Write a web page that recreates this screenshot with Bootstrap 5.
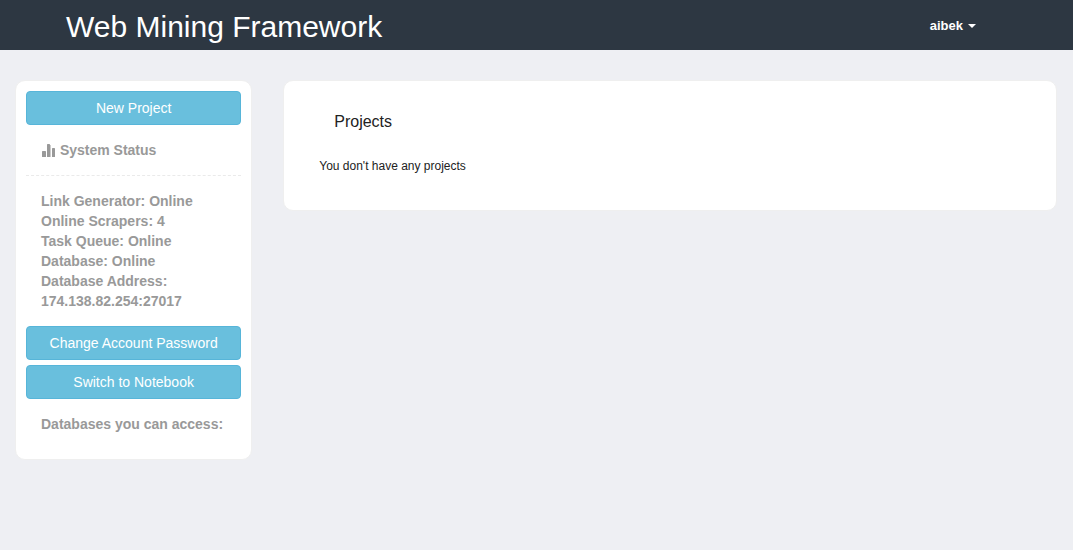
<!DOCTYPE html>
<html lang="en">
<head>
<meta charset="utf-8">
<meta name="viewport" content="width=device-width, initial-scale=1">
<title>Web Mining Framework</title>
<link href="https://cdn.jsdelivr.net/npm/bootstrap@5.3.0/dist/css/bootstrap.min.css" rel="stylesheet">
<style>
body { background: #eeeff3; color: #222; font-family: "Liberation Sans", Arial, sans-serif; font-size: 14px; line-height: 20px; }
.topbar { background: #2d3742; min-height: 50px; }
.brand-title { font-size: 30px; line-height: 34px; color: #fff; padding: 4px 0 0 66px; }
.user-menu { font-size: 13px; line-height: 20px; color: #fff; margin-right: 97px; }
.user-menu::after { margin-left: 5px; border-width: 4px 4px 0; vertical-align: 2px; }
.layout { --bs-gutter-x: 30px; padding-top: 30px; }
.layout > .row { --bs-gutter-x: 30px; }
.layout > .row > * { padding-right: 16px; }
.panel { background: #fff; border: 1px solid #efefef; border-radius: 10px; }
.side-panel { padding: 10px 10px 25px; }
.btn-sky { --bs-btn-color: #fff; --bs-btn-bg: #69bfdd; --bs-btn-border-color: #57b5d9; --bs-btn-hover-color: #fff; --bs-btn-hover-bg: #4db3d6; --bs-btn-hover-border-color: #3aa9d0; font-size: 14px; line-height: 20px; padding: 6px 12px; border-radius: 4px; }
.side-note { padding: 15px; color: #999; font-weight: 700; }
.side-actions { gap: 5px; }
.dashed { border-bottom: 1px dashed #eaeaea; }
.main-panel { padding: 30px 35px; }
.main-title { font-size: 16px; line-height: 22px; padding: 0 15px; margin: 0 0 23px; font-weight: 400; }
.main-text { font-size: 12px; line-height: 20px; margin: 0 0 4px; }
</style>
</head>
<body>
<nav class="topbar d-flex align-items-center justify-content-between">
  <a class="brand-title text-decoration-none" href="#">Web Mining Framework</a>
  <div class="dropdown">
    <button class="user-menu dropdown-toggle btn border-0 p-0 fw-bold" type="button" data-bs-toggle="dropdown" aria-expanded="false">aibek</button>
    <ul class="dropdown-menu dropdown-menu-end"><li><a class="dropdown-item" href="#">Logout</a></li></ul>
  </div>
</nav>
<main class="container-fluid layout">
  <div class="row align-items-start">
    <div class="col-3">
      <aside class="panel side-panel">
        <button type="button" class="btn btn-sky w-100">New Project</button>
        <div class="side-note dashed">
          <svg width="15" height="14" viewBox="0 0 15 14" fill="#999" aria-hidden="true"><rect x="1" y="7" width="4" height="6" rx=".6"/><rect x="6" y="0" width="3" height="13" rx=".6"/><rect x="9" y="1" width="1" height="12" opacity=".5"/><rect x="11" y="4" width="3" height="9" rx=".6"/></svg>
          System Status
        </div>
        <div class="side-note">
          Link Generator: Online<br>
          Online Scrapers: 4<br>
          Task Queue: Online<br>
          Database: Online<br>
          Database Address:<br>
          174.138.82.254:27017
        </div>
        <div class="d-grid side-actions">
          <button type="button" class="btn btn-sky">Change Account Password</button>
          <button type="button" class="btn btn-sky">Switch to Notebook</button>
        </div>
        <div class="side-note pb-0">Databases you can access:</div>
      </aside>
    </div>
    <div class="col-9">
      <section class="panel main-panel">
        <h1 class="main-title">Projects</h1>
        <p class="main-text">You don't have any projects</p>
      </section>
    </div>
  </div>
</main>
<script src="https://cdn.jsdelivr.net/npm/bootstrap@5.3.0/dist/js/bootstrap.bundle.min.js"></script>
</body>
</html>
